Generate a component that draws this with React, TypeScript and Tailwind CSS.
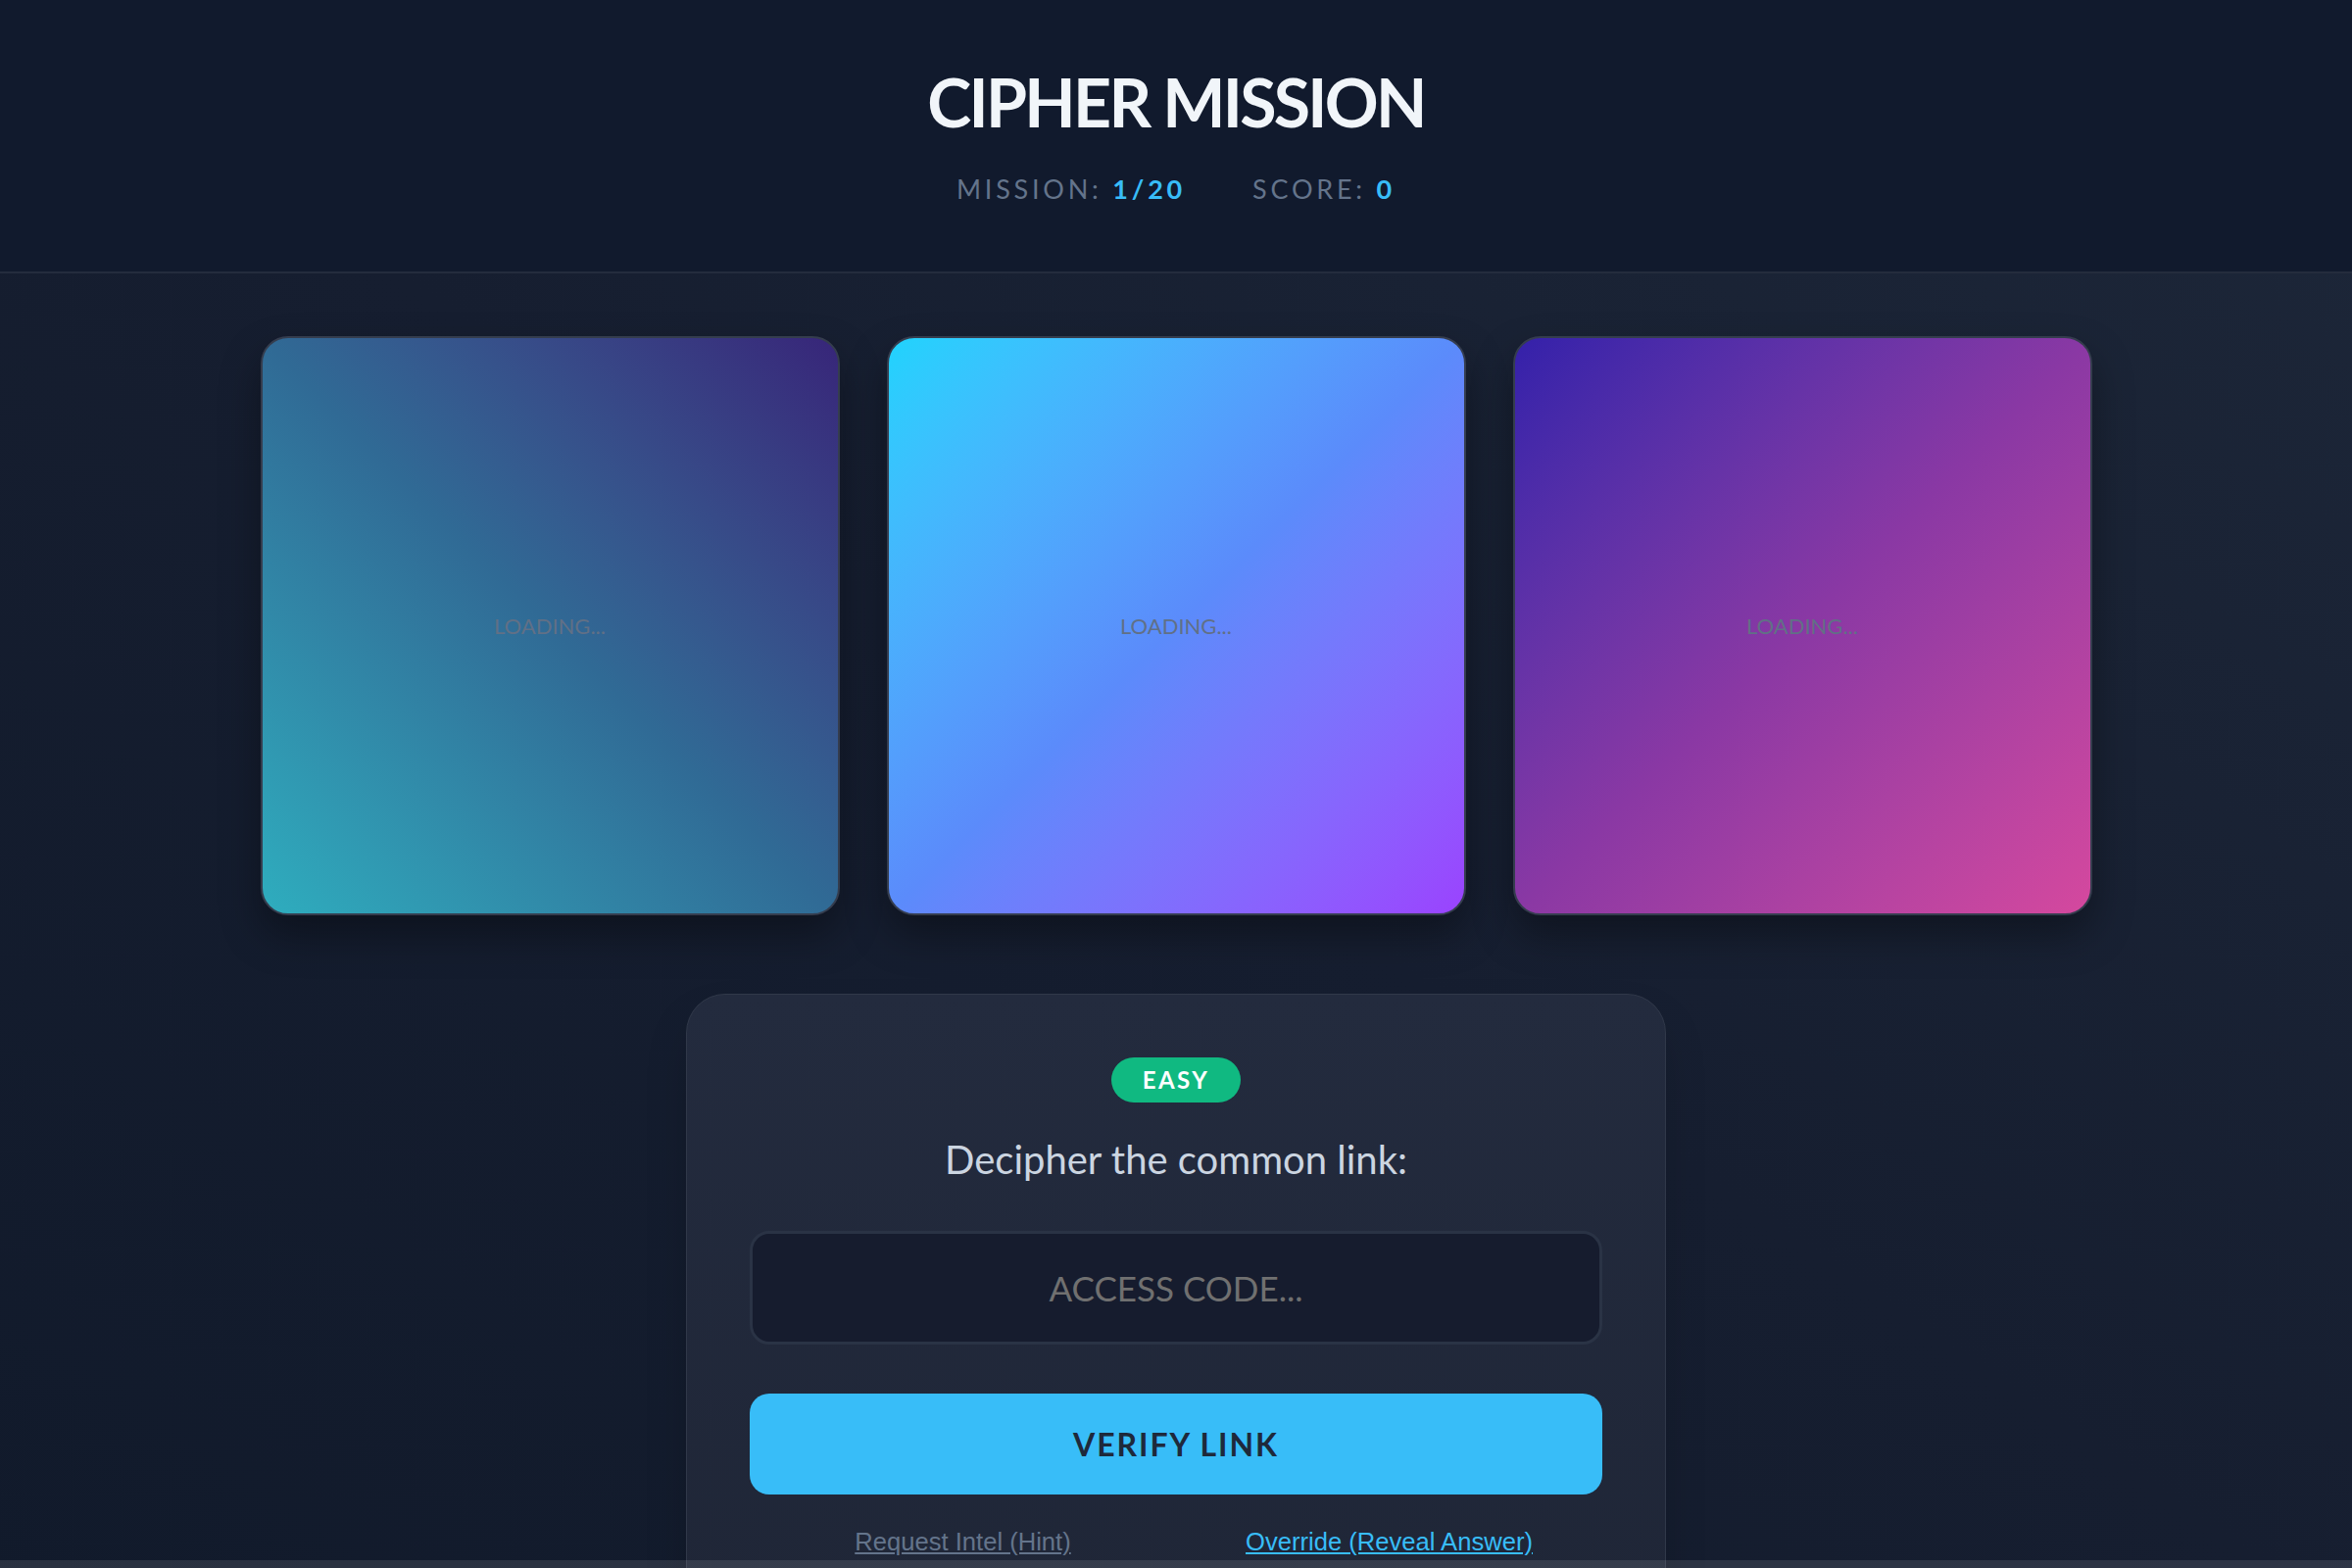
const cards = [
  { id: 1, bg: "bg-gradient-to-tr from-[#2eadbe] via-[#306a95] to-[#372579]" },
  { id: 2, bg: "bg-gradient-to-br from-[#1fd3fd] via-[#5b8bfb] to-[#9a42fe]" },
  { id: 3, bg: "bg-gradient-to-br from-[#3420aa] via-[#8a38a4] to-[#d5489e]" },
];

export default function App() {
  return (
    <div className="min-h-screen bg-gradient-to-bl from-[#1d2739] via-[#161e30] to-[#111a2b] font-['Lato',sans-serif]">
      <header className="border-b-2 border-[#242c3d] bg-[#111a2d] pb-[70px] pt-[70px] text-center">
        <h1 className="text-[68px] font-bold leading-none tracking-[-0.04em] text-[#f1f5f9]">
          CIPHER MISSION
        </h1>
        <div className="mt-[41px] flex justify-center gap-[68px] text-[27px] leading-[28px] tracking-[0.14em]">
          <span className="text-[#64748b]">
            MISSION: <span className="font-bold text-[#38bdf8]">1/20</span>
          </span>
          <span className="text-[#64748b]">
            SCORE: <span className="font-bold text-[#38bdf8]">0</span>
          </span>
        </div>
      </header>

      <main className="flex flex-col items-center pt-16">
        <div className="flex gap-12">
          {cards.map((card) => (
            <div
              key={card.id}
              className={`flex h-[591px] w-[591px] items-center justify-center rounded-[28px] border-2 border-[#353d4e] shadow-[0_20px_40px_rgba(0,0,0,0.35)] ${card.bg}`}
            >
              <span className="text-[22px] text-[#617086]">LOADING...</span>
            </div>
          ))}
        </div>

        <section className="mt-20 w-[1000px] rounded-[40px] border border-[#303849] bg-gradient-to-b from-[#232b3e] to-[#1f2637] px-16 pb-16 pt-16 text-center shadow-2xl">
          <span className="inline-block rounded-full bg-[#10b981] px-8 py-[10px] text-[24px] font-bold leading-[26px] tracking-[0.1em] text-white">
            EASY
          </span>
          <h2 className="mt-[38px] text-[40px] leading-none text-[#cbd5e1]">Decipher the common link:</h2>
          <input
            type="text"
            placeholder="ACCESS CODE..."
            className="mt-[53px] h-[116px] w-full rounded-[20px] border-[3px] border-[#2a3345] bg-[#161c2e] text-center text-[35px] uppercase text-white outline-none placeholder:text-[#707070]"
          />
          <button className="mt-[50px] h-[103px] w-full rounded-[20px] bg-[#38bdf8] text-[32px] font-bold tracking-[0.06em] text-[#1e293b]">
            VERIFY LINK
          </button>
          <div className="mt-[29px] grid grid-cols-2 font-['Liberation_Sans',Arial,sans-serif] text-[25.6px]">
            <div className="flex justify-center">
              <button className="text-[#64748b] underline">Request Intel (Hint)</button>
            </div>
            <div className="flex justify-center">
              <button className="text-[#38bdf8] underline">Override (Reveal Answer)</button>
            </div>
          </div>
        </section>
      </main>

      <div className="fixed inset-x-0 bottom-0 h-2 bg-white/10" />
    </div>
  );
}
